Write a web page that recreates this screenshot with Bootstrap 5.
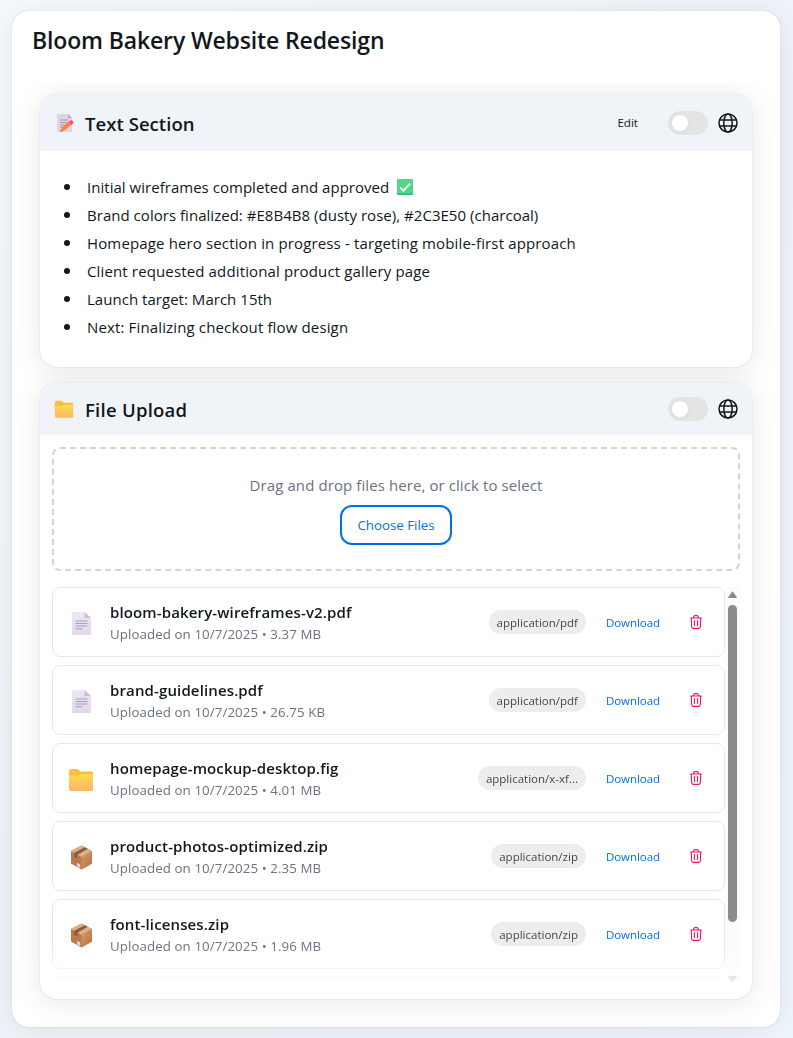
<!DOCTYPE html>
<html lang="en">
<head>
<meta charset="utf-8">
<meta name="viewport" content="width=device-width, initial-scale=1">
<title>Bloom Bakery Website Redesign</title>
<link rel="stylesheet" href="https://cdn.jsdelivr.net/npm/bootstrap@5.3.0/dist/css/bootstrap.min.css">
<style>
  body {
    font-family: "Open Sans", "Noto Sans", sans-serif;
    font-size: 15px;
    color: #11181c;
    background: linear-gradient(135deg, #f6fafe 0%, #eff3f9 50%, #eef5fd 100%);
    height: 1038px;
    overflow: hidden;
  }
  .project {
    margin: 11px 13px 11px 12px;
    height: 1016px;
    border-radius: 16px;
    box-shadow: 0 0 1px rgba(0,0,0,.3), 0 2px 30px rgba(0,0,0,.08);
    overflow: hidden;
  }
  .project-title { height: 72px; padding: 11px 20px 0; font-size: 23px; line-height: 36px; letter-spacing: -.14px; }
  .medium { font-weight: 600; }
  .sections { height: 944px; padding: 12px 28px 28px; gap: 16px; overflow: hidden; }
  .panel {
    border-radius: 16px;
    box-shadow: 0 0 1px rgba(0,0,0,.3), 0 2px 30px rgba(0,0,0,.1);
    background: #fff;
  }
  .panel-head { background: #f0f3f8; border-radius: 16px 16px 0 0; padding: 0 14px; }
  .head-text { height: 56px; }
  .head-file { height: 52px; }
  .panel-title { font-size: 18.5px; line-height: 28px; padding-top: 1px; margin-left: 11px; letter-spacing: .05px; }
  .head-file .panel-title { letter-spacing: .25px; }
  .edit-btn { font-size: 11.6px; margin-right: 30px; color: #11181c; }
  .toggle { width: 40px; height: 24px; border-radius: 12px; background: #e4e4e5; padding: 4px; margin-right: 10px; }
  .toggle span { display: block; width: 16px; height: 16px; border-radius: 50%; background: #fff; box-shadow: 0 0 5px rgba(0,0,0,.05); }
  .notes { height: 216px; padding: 22px 0 0 24px; margin: 0; line-height: 28px; }
  .notes li { height: 28px; display: flex; align-items: center; }
  .notes li::before { content: ""; width: 6px; height: 6px; border-radius: 50%; background: #11181c; margin-right: 17px; }
  .note-wide { letter-spacing: .14px; }
  .note-mid { letter-spacing: .03px; }
  .files-body { padding: 12px; }
  .drop { height: 124px; border: 2px dashed #d1d5db; border-radius: 8px; color: #6b7280; padding-top: 24px; }
  .drop p { line-height: 24px; margin-bottom: 8px; letter-spacing: .09px; }
  .choose { width: 112px; height: 40px; border: 2px solid #006fee; border-radius: 12px; color: #006fee; font-size: 13.3px; background: transparent; padding: 1px 0 0; }
  .file-scroll {
    height: 400px; margin-top: 16px; overflow: hidden;
    -webkit-mask-image: linear-gradient(#000 calc(100% - 40px), transparent);
    mask-image: linear-gradient(#000 calc(100% - 40px), transparent);
  }
  .file-list { gap: 8px; }
  .file { height: 70px; border: 1px solid #e5e7eb; border-radius: 8px; padding: 0 14px 0 16px; flex-shrink: 0; }
  .file-icon { width: 24px; height: 28px; margin: 2px 17px 0 0; flex-shrink: 0; }
  .file-name { line-height: 24px; letter-spacing: .13px; }
  .file-meta { line-height: 20px; font-size: 13.3px; color: #6b7280; letter-spacing: .085px; }
  .mime { height: 24px; line-height: 25px; border-radius: 12px; background: #ededee; color: #46464b; font-size: 11.5px; padding: 0 8px; }
  .download { color: #006fee; font-size: 11.5px; letter-spacing: -.05px; padding-top: 1px; margin: 0 30px 0 20px; }
  .track { width: 15px; background: #fcfcfc; padding-top: 4px; }
  .thumb { width: 9px; height: 317px; border-radius: 5px; background: #8b8b8b; margin: 6px 0 54px; }
</style>
</head>
<body>

<svg width="0" height="0" class="d-none" aria-hidden="true">
  <symbol id="globe" viewBox="0 0 20 20">
    <g fill="none" stroke="#11181c" stroke-width="1.5">
      <circle cx="10" cy="10" r="9"/><ellipse cx="10" cy="10" rx="4.2" ry="9"/>
      <path d="M1.8 6.9h16.4M1.8 13.1h16.4"/>
    </g>
  </symbol>
  <symbol id="trash" viewBox="0 0 12 14">
    <g fill="none" stroke="#f31260" stroke-width="1.1" stroke-linecap="round">
      <path d="M.6 3h10.8M3.6 3v-.9Q3.6.6 5 .6h2Q8.400.6 8.400 2.100V3M1.300 3.200l.3 8.300q.1 1.900 2 1.900h4.800q1.900 0 2-1.900l.3-8.300M4.400 5.500v5.200M7.600 5.500v5.200"/>
    </g>
  </symbol>
</svg>
<svg width="0" height="0" style="position:absolute" aria-hidden="true">
  <defs>
    <linearGradient id="paper" x1="0" y1="0" x2="0" y2="1"><stop offset="0" stop-color="#ede7f3"/><stop offset="1" stop-color="#e2d8ee"/></linearGradient>
    <linearGradient id="gold" x1="0" y1="0" x2="0" y2="1"><stop offset="0" stop-color="#ffdb4d"/><stop offset="1" stop-color="#fdb664"/></linearGradient>
    <linearGradient id="kraft" x1="0" y1="0" x2="1" y2="1"><stop offset="0" stop-color="#d79d6b"/><stop offset="1" stop-color="#b96f3f"/></linearGradient>
  </defs>
</svg>

<main class="project bg-white d-flex flex-column">
  <h1 class="project-title medium m-0"><span>Bloom Bakery Website Redesign</span></h1>
  <div class="sections d-flex flex-column">

    <section class="panel">
      <header class="panel-head head-text d-flex align-items-center">
        <svg width="20" height="20" viewBox="0 0 20 20">
          <path d="M3 1h11l4 4v14H3z" fill="#dfd3e5"/><path d="M14 1l4 4h-4z" fill="#b9acc2"/>
          <path d="M6 7h8M6 9.500h8M6 12h6M6 14.500h3" stroke="#a799b4" stroke-width="1"/>
          <path d="M6.500 18.500l1.200-4.200 7-5.500 2.600 3.200-7 5.500z" fill="#fb8240"/><path d="M14.700 8.800l1.600-1.200q2-.8 2.900 1 .5 1.300-.4 2.200l-1.500 1.200z" fill="#f8525b"/><path d="M6.500 18.500l.5-1.800 1.300 1.500z" fill="#66525f"/>
        </svg>
        <h2 class="panel-title medium mb-0"><span>Text Section</span></h2>
        <span class="edit-btn ms-auto">Edit</span>
        <div class="toggle"><span></span></div>
        <svg width="20" height="20"><use href="#globe"/></svg>
      </header>
      <ul class="notes">
        <li><span class="note-mid">Initial wireframes completed and approved</span>
          <svg class="ms-2" width="16" height="16" viewBox="2 0 16 16"><rect x="2" width="16" height="16" rx="1.500" fill="#2eb66c"/><rect x="2" width="16" height="14.500" rx="1.500" fill="#52d688"/><path d="M5 8.300l3.400 3.400 6.700-7" fill="none" stroke="#fff" stroke-width="1.800"/></svg></li>
        <li><span class="note-mid">Brand colors finalized: #E8B4B8 (dusty rose), #2C3E50 (charcoal)</span></li>
        <li><span class="note-wide">Homepage hero section in progress - targeting mobile-first approach</span></li>
        <li><span class="note-wide">Client requested additional product gallery page</span></li>
        <li><span class="note-mid">Launch target: March 15th</span></li>
        <li><span class="note-wide">Next: Finalizing checkout flow design</span></li>
      </ul>
    </section>

    <section class="panel">
      <header class="panel-head head-file d-flex align-items-center">
        <svg width="20" height="20" viewBox="0 0 24 24"><path d="M1 4q0-2 2-2h6l3 2.500h10q1 0 1 1V10H1z" fill="#fdbd3f"/><path d="M1 8.500h8l3-1.500h11v15.500H3q-2 0-2-2z" fill="url(#gold)"/></svg>
        <h2 class="panel-title medium mb-0"><span>File Upload</span></h2>
        <div class="toggle ms-auto"><span></span></div>
        <svg width="20" height="20"><use href="#globe"/></svg>
      </header>
      <div class="files-body">
        <div class="drop text-center">
          <p><span>Drag and drop files here, or click to select</span></p>
          <button class="choose" type="button">Choose Files</button>
        </div>
        <div class="file-scroll d-flex">
          <div class="file-list d-flex flex-column flex-grow-1" id="files"></div>
          <div class="track d-flex flex-column align-items-center">
            <svg width="9" height="8" viewBox="0 0 9 8"><path d="M4.500.8L8.500 6.500H.5z" fill="#8b8b8b" stroke="#8b8b8b" stroke-linejoin="round"/></svg>
            <div class="thumb"></div>
            <svg width="9" height="8" viewBox="0 0 9 8"><path d="M4.500 6.500L8.500.8H.5z" fill="#8b8b8b" stroke="#8b8b8b" stroke-linejoin="round"/></svg>
          </div>
        </div>
      </div>
    </section>
  </div>
</main>

<script>
  const icons = {
    page: '<path d="M3 3h12.500L22 9v17H3z" fill="url(#paper)"/><path d="M15.500 3L22 9h-6.500z" fill="#cbbfd5"/><path d="M6.500 12h12M6.500 14.500h12M6.500 17h12M6.500 19.800h7" stroke="#a99fb5" stroke-width="1.100"/>',
    folder: '<path d="M0 6q0-2 2-2h6.500l3 2.500H23q1 0 1 1V12H0z" fill="#fdbd3f"/><path d="M0 10.500h9l3-1.500h12v17H2q-2 0-2-2z" fill="url(#gold)"/>',
    box: '<path d="M12.500 2.500L23 8v12.500l-10.500 6L2 20.500V8z" fill="#b97a4d"/><path d="M12.500 2.500L23 8l-10.500 6L2 8z" fill="#dfb083"/><path d="M12.500 14L23 8v12.500l-10.500 6z" fill="url(#kraft)"/><path d="M5.300 9.800L15.700 4.200l3 1.600L8.500 11.800v4l-1.600-1.400-1.600.4z" fill="#8c5b42"/><path d="M8 19.800l3.200 1.600V25L8 23.200z" fill="#dcd5e6"/>'
  };
  const files = [
    ['bloom-bakery-wireframes-v2.pdf', '3.37 MB', 'application/pdf', 'page'],
    ['brand-guidelines.pdf', '26.75 KB', 'application/pdf', 'page'],
    ['homepage-mockup-desktop.fig', '4.01 MB', 'application/x-xf...', 'folder'],
    ['product-photos-optimized.zip', '2.35 MB', 'application/zip', 'box'],
    ['font-licenses.zip', '1.96 MB', 'application/zip', 'box']
  ];
  document.getElementById('files').innerHTML = files.map(([name, size, mime, icon]) => `
    <div class="file d-flex align-items-center">
      <svg class="file-icon" viewBox="0 0 24 28">${icons[icon]}</svg>
      <div class="me-auto">
        <div class="file-name medium"><span>${name}</span></div>
        <div class="file-meta"><span>Uploaded on 10/7/2025 • ${size}</span></div>
      </div>
      <span class="mime">${mime}</span>
      <span class="download">Download</span>
      <svg width="12" height="14" class="me-2"><use href="#trash"/></svg>
    </div>`).join('') + '<div class="file"></div>';
</script>
<script src="https://cdn.jsdelivr.net/npm/bootstrap@5.3.0/dist/js/bootstrap.bundle.min.js"></script>
</body>
</html>
